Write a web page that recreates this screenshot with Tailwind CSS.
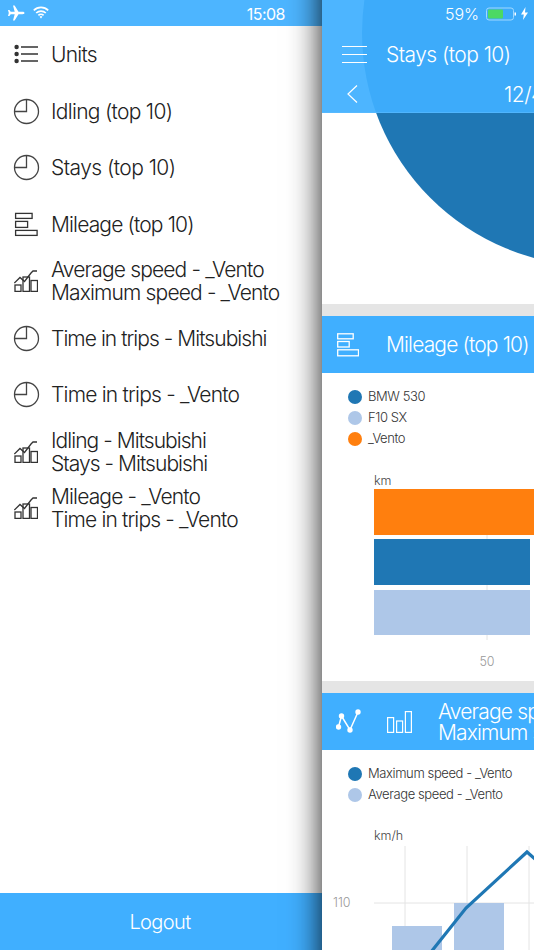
<!doctype html>
<html>
<head>
<meta charset="utf-8">
<script src="https://cdn.jsdelivr.net/npm/@tailwindcss/browser@4"></script>
</head>
<body class="m-0 bg-white">
<div class="relative w-[534px] h-[950px] overflow-hidden bg-white font-['Inter','Liberation_Sans',sans-serif] font-light text-[#222]">

  <!-- Left menu -->
  <div class="flex flex-col w-[322px] h-full">
    <div class="h-[26px] bg-[#4db5ff] flex items-center justify-between pl-[7px] pr-[37px] text-white">
      <div class="flex items-center gap-[8px]">
        <svg width="18" height="16" viewBox="0 0 18 16" fill="#fff"><path d="M17.5 8c0-.8-1-1.2-2-1.2h-4L7.6.6H6l1.7 6.2H3.7L2.4 5H1l.8 3-.8 3h1.4l1.3-1.8h4L6 15.4h1.6l3.9-6.2h4c1 0 2-.4 2-1.2z"/></svg>
        <svg class="-mt-[2px]" width="16" height="13" viewBox="0 0 16 13" fill="none" stroke="#fff" stroke-width="1.7"><path d="M.8 4.4a10.2 10.2 0 0 1 14.4 0"/><path d="M3.2 7a6.9 6.9 0 0 1 9.6 0"/><path d="M5.4 9.4a3.7 3.7 0 0 1 5.2 0"/><path d="M6.6 10.8 8 12.4l1.4-1.6a2 2 0 0 0-2.8 0z" fill="#fff" stroke="none"/></svg>
      </div>
      <span class="text-[16px] font-normal tracking-[-0.5px] pt-[1px]">15:08</span>
    </div>

    <ul class="flex flex-col flex-1 text-[21px] leading-[23px]">
      <li class="h-[56.75px] flex items-center gap-[11px] pl-[14px]">
        <svg class="w-[26px] h-[20px]" viewBox="0 0 26 20" fill="none" stroke="#333" stroke-width="1.3"><circle cx="2.6" cy="3" r="2.2" fill="#333" stroke="none"/><circle cx="2.6" cy="10" r="2.2" fill="#333" stroke="none"/><circle cx="2.6" cy="17" r="2.2" fill="#333" stroke="none"/><path d="M7 3h17M7 10h17M7 17h17"/></svg>
        <span class="tracking-[-0.75px]">Units</span>
      </li>
      <li class="h-[56.75px] flex items-center gap-[11px] pl-[13px]">
        <svg class="w-[27px] h-[27px]" viewBox="0 0 27 27" fill="none" stroke="#444" stroke-width="1.3"><circle cx="13.5" cy="13.5" r="12"/><path d="M13.5 1.500v12H1.500"/></svg>
        <span class="tracking-[-0.7px]">Idling (top 10)</span>
      </li>
      <li class="h-[56.75px] flex items-center gap-[11px] pl-[13px]">
        <svg class="w-[27px] h-[27px]" viewBox="0 0 27 27" fill="none" stroke="#444" stroke-width="1.3"><circle cx="13.5" cy="13.5" r="12"/><path d="M13.5 1.500v12H1.500"/></svg>
        <span class="tracking-[-0.55px]">Stays (top 10)</span>
      </li>
      <li class="h-[56.75px] flex items-center gap-[12px] pl-[14px]">
        <svg class="w-[25px] h-[25px]" viewBox="0 0 25 25" fill="none" stroke="#333" stroke-width="1.3"><rect x="1.600" y="1.400" width="16.500" height="5"/><rect x="1.600" y="9.400" width="12" height="6"/><rect x="1.600" y="18.400" width="21.500" height="5"/></svg>
        <span class="tracking-[-0.85px]">Mileage (top 10)</span>
      </li>
      <li class="h-[56.75px] flex items-center gap-[13px] pl-[14px]">
        <svg class="w-[24px] h-[22px]" viewBox="0 0 24 22" fill="none" stroke="#333" stroke-width="1.3"><rect x="1" y="15" width="6" height="6.400"/><rect x="9" y="7" width="6.500" height="14.400"/><rect x="17" y="10.500" width="6.500" height="10.900"/><path d="M.3 13 6 7.500l4.500 4L17 3l2-2h4"/></svg>
        <span class="tracking-[-0.85px]">Average speed - _Vento<br>Maximum speed - _Vento</span>
      </li>
      <li class="h-[56.75px] flex items-center gap-[11px] pl-[13px]">
        <svg class="w-[27px] h-[27px]" viewBox="0 0 27 27" fill="none" stroke="#444" stroke-width="1.3"><circle cx="13.5" cy="13.5" r="12"/><path d="M13.5 1.500v12H1.500"/></svg>
        <span class="tracking-[-0.95px]">Time in trips - Mitsubishi</span>
      </li>
      <li class="h-[56.75px] flex items-center gap-[11px] pl-[13px]">
        <svg class="w-[27px] h-[27px]" viewBox="0 0 27 27" fill="none" stroke="#444" stroke-width="1.3"><circle cx="13.5" cy="13.5" r="12"/><path d="M13.5 1.500v12H1.500"/></svg>
        <span class="tracking-[-0.78px]">Time in trips - _Vento</span>
      </li>
      <li class="h-[56.75px] flex items-center gap-[13px] pl-[14px]">
        <svg class="w-[24px] h-[22px]" viewBox="0 0 24 22" fill="none" stroke="#333" stroke-width="1.3"><rect x="1" y="15" width="6" height="6.400"/><rect x="9" y="7" width="6.500" height="14.400"/><rect x="17" y="10.500" width="6.500" height="10.900"/><path d="M.3 13 6 7.500l4.500 4L17 3l2-2h4"/></svg>
        <span class="tracking-[-0.95px]">Idling - Mitsubishi<br>Stays - Mitsubishi</span>
      </li>
      <li class="h-[56.75px] flex items-center gap-[13px] pl-[14px]">
        <svg class="w-[24px] h-[22px]" viewBox="0 0 24 22" fill="none" stroke="#333" stroke-width="1.3"><rect x="1" y="15" width="6" height="6.400"/><rect x="9" y="7" width="6.500" height="14.400"/><rect x="17" y="10.500" width="6.500" height="10.900"/><path d="M.3 13 6 7.500l4.500 4L17 3l2-2h4"/></svg>
        <span class="tracking-[-0.85px]">Mileage - _Vento<br>Time in trips - _Vento</span>
      </li>
    </ul>

    <div class="h-[57px] bg-[#40afff] flex items-center justify-center pr-[2px] text-white text-[20px] tracking-[-0.6px]">Logout</div>
  </div>

  <!-- Sliding content panel, lying over the menu -->
  <div class="absolute top-0 left-[322px] w-[212px] h-full">
    <div class="absolute -top-[60px] -bottom-[60px] left-0 right-0 shadow-[0_0_30px_rgba(0,0,0,0.9)]"></div>
    <div class="relative h-full overflow-hidden bg-white flex flex-col">

      <!-- Stays card -->
      <section class="relative h-[304px] shrink-0 overflow-hidden bg-white">
        <div class="absolute left-[40px] top-[-200px] w-[466px] h-[466px] rounded-full bg-[#1f77b4]"></div>
        <div class="absolute inset-x-0 top-0 h-[113px] bg-[#40afff]/93 border-b border-[#5dbcff]/60 text-white">
          <div class="flex justify-end items-center gap-[5px] h-[27px] pr-[6px]">
            <span class="text-[16px] mr-[2px]">59%</span>
            <svg width="30" height="14" viewBox="0 0 30 14"><rect x=".5" y="1" width="27" height="12" rx="2.5" fill="none" stroke="#9fd8ff"/><rect x="2" y="2.500" width="15" height="9" rx="1" fill="#4cd964"/><rect x="28.500" y="5.500" width="1.500" height="3" fill="#fff"/></svg>
            <svg width="7" height="13" viewBox="0 0 7 13" fill="#fff"><path d="M4.500 0 0 7.500h2.800L2 13l5-7.500H4z"/></svg>
          </div>
          <div class="flex items-center h-[55px] pl-[20px] gap-[19px] text-[21px] tracking-[-0.55px]">
            <svg width="25" height="17" viewBox="0 0 25 17" fill="none" stroke="#fff" stroke-width="1"><path d="M0 .5h25M0 8.500h25M0 16.500h25"/></svg>
            <span class="whitespace-nowrap">Stays (top 10)</span>
          </div>
          <div class="relative h-[30px] mt-[2px]">
            <svg class="absolute left-[25px] top-[1px]" width="11" height="18" viewBox="0 0 11 18" fill="none" stroke="#fff" stroke-width="1.2"><path d="M10 .5 1 9l9 8.500"/></svg>
            <span class="absolute left-[182px] top-0 text-[21px] leading-[21px] whitespace-nowrap tracking-[-0.5px]">12/4</span>
          </div>
        </div>
      </section>

      <div class="h-[12px] shrink-0 bg-[#e5e5e5]"></div>

      <!-- Mileage card -->
      <header class="h-[57px] shrink-0 bg-[#40afff] text-white flex items-center pl-[15px] gap-[27px] text-[21px] tracking-[-0.85px]">
        <svg width="22" height="24" viewBox="0 0 22 24" fill="none" stroke="#fff" stroke-width="1.3"><rect x=".7" y=".8" width="15.500" height="5"/><rect x=".7" y="8.500" width="11.500" height="5.500"/><rect x=".7" y="16.800" width="20.800" height="6"/></svg>
        <span class="whitespace-nowrap">Mileage (top 10)</span>
      </header>
      <section class="h-[308px] shrink-0 bg-white flex flex-col">
        <ul class="pt-[13px] pl-[26px] flex flex-col text-[13px] leading-[21px] tracking-[-0.4px] text-[#333]">
          <li class="flex items-center gap-[6px]"><span class="w-[14px] h-[14px] rounded-full bg-[#1f77b4]"></span>BMW 530</li>
          <li class="flex items-center gap-[6px]"><span class="w-[14px] h-[14px] rounded-full bg-[#aec7e8]"></span>F10 SX</li>
          <li class="flex items-center gap-[6px]"><span class="w-[14px] h-[14px] rounded-full bg-[#ff7f0e]"></span>_Vento</li>
        </ul>
        <svg class="mt-[25px] shrink-0" width="212" height="207" viewBox="0 0 212 207" font-size="12.5" font-family="Inter">
          <text x="52" y="11" fill="#444">km</text>
          <path d="M165 15v151" stroke="#e4e4e4"/>
          <rect x="52" y="15" width="160" height="46" fill="#ff7f0e"/>
          <rect x="52" y="65" width="156" height="46" fill="#1f77b4"/>
          <rect x="52" y="116" width="156" height="45" fill="#aec7e8"/>
          <text x="165" y="192" fill="#999" text-anchor="middle">50</text>
        </svg>
      </section>

      <div class="h-[12px] shrink-0 bg-[#e5e5e5]"></div>

      <!-- Speed card -->
      <header class="h-[57px] shrink-0 bg-[#40afff] text-white flex items-center pl-[14px] text-[21px] leading-[21px] tracking-[-0.85px]">
        <svg class="mr-[25px] shrink-0" width="26" height="28" viewBox="0 0 26 28" fill="none" stroke="#fff" stroke-width="1.5"><path d="M2.500 19 5.500 8l8.500 14L22 4"/><circle cx="2.500" cy="19" r="2.700" fill="#fff" stroke="none"/><circle cx="5.500" cy="8" r="2.700" fill="#fff" stroke="none"/><circle cx="14" cy="22" r="2.700" fill="#fff" stroke="none"/><circle cx="22" cy="4" r="2.700" fill="#fff" stroke="none"/></svg>
        <svg class="mr-[26px] shrink-0" width="25" height="22" viewBox="0 0 25 22" fill="none" stroke="#fff" stroke-width="1.2"><rect x=".6" y="6.600" width="6" height="14.800"/><rect x="9.600" y="10" width="6" height="11.400"/><rect x="18.400" y=".6" width="6" height="20.800"/></svg>
        <span class="whitespace-nowrap">Average speed - _Vento<br>Maximum speed - _Vento</span>
      </header>
      <section class="flex-1 bg-white relative">
        <ul class="pt-[13px] pl-[26px] flex flex-col text-[13px] leading-[21px] tracking-[-0.4px] text-[#333]">
          <li class="flex items-center gap-[6px]"><span class="w-[14px] h-[14px] rounded-full bg-[#1f77b4]"></span>Maximum speed - _Vento</li>
          <li class="flex items-center gap-[6px]"><span class="w-[14px] h-[14px] rounded-full bg-[#aec7e8]"></span>Average speed - _Vento</li>
        </ul>
        <svg class="mt-[20px]" width="212" height="126" viewBox="0 0 212 126" font-size="12.5" font-family="Inter">
          <text x="52" y="15" fill="#444">km/h</text>
          <path d="M83 21v105M145 21v105M207 21v105M52 78h160" stroke="#e4e4e4"/>
          <rect x="70" y="101" width="50" height="25" fill="#aec7e8"/>
          <rect x="132" y="78" width="50" height="48" fill="#aec7e8"/>
          <text x="11" y="82" fill="#999">110</text>
          <path d="M109 127 144 83 205 27l8 7" fill="none" stroke="#1f77b4" stroke-width="3.2"/>
        </svg>
      </section>
    </div>
  </div>
</div>
</body>
</html>
